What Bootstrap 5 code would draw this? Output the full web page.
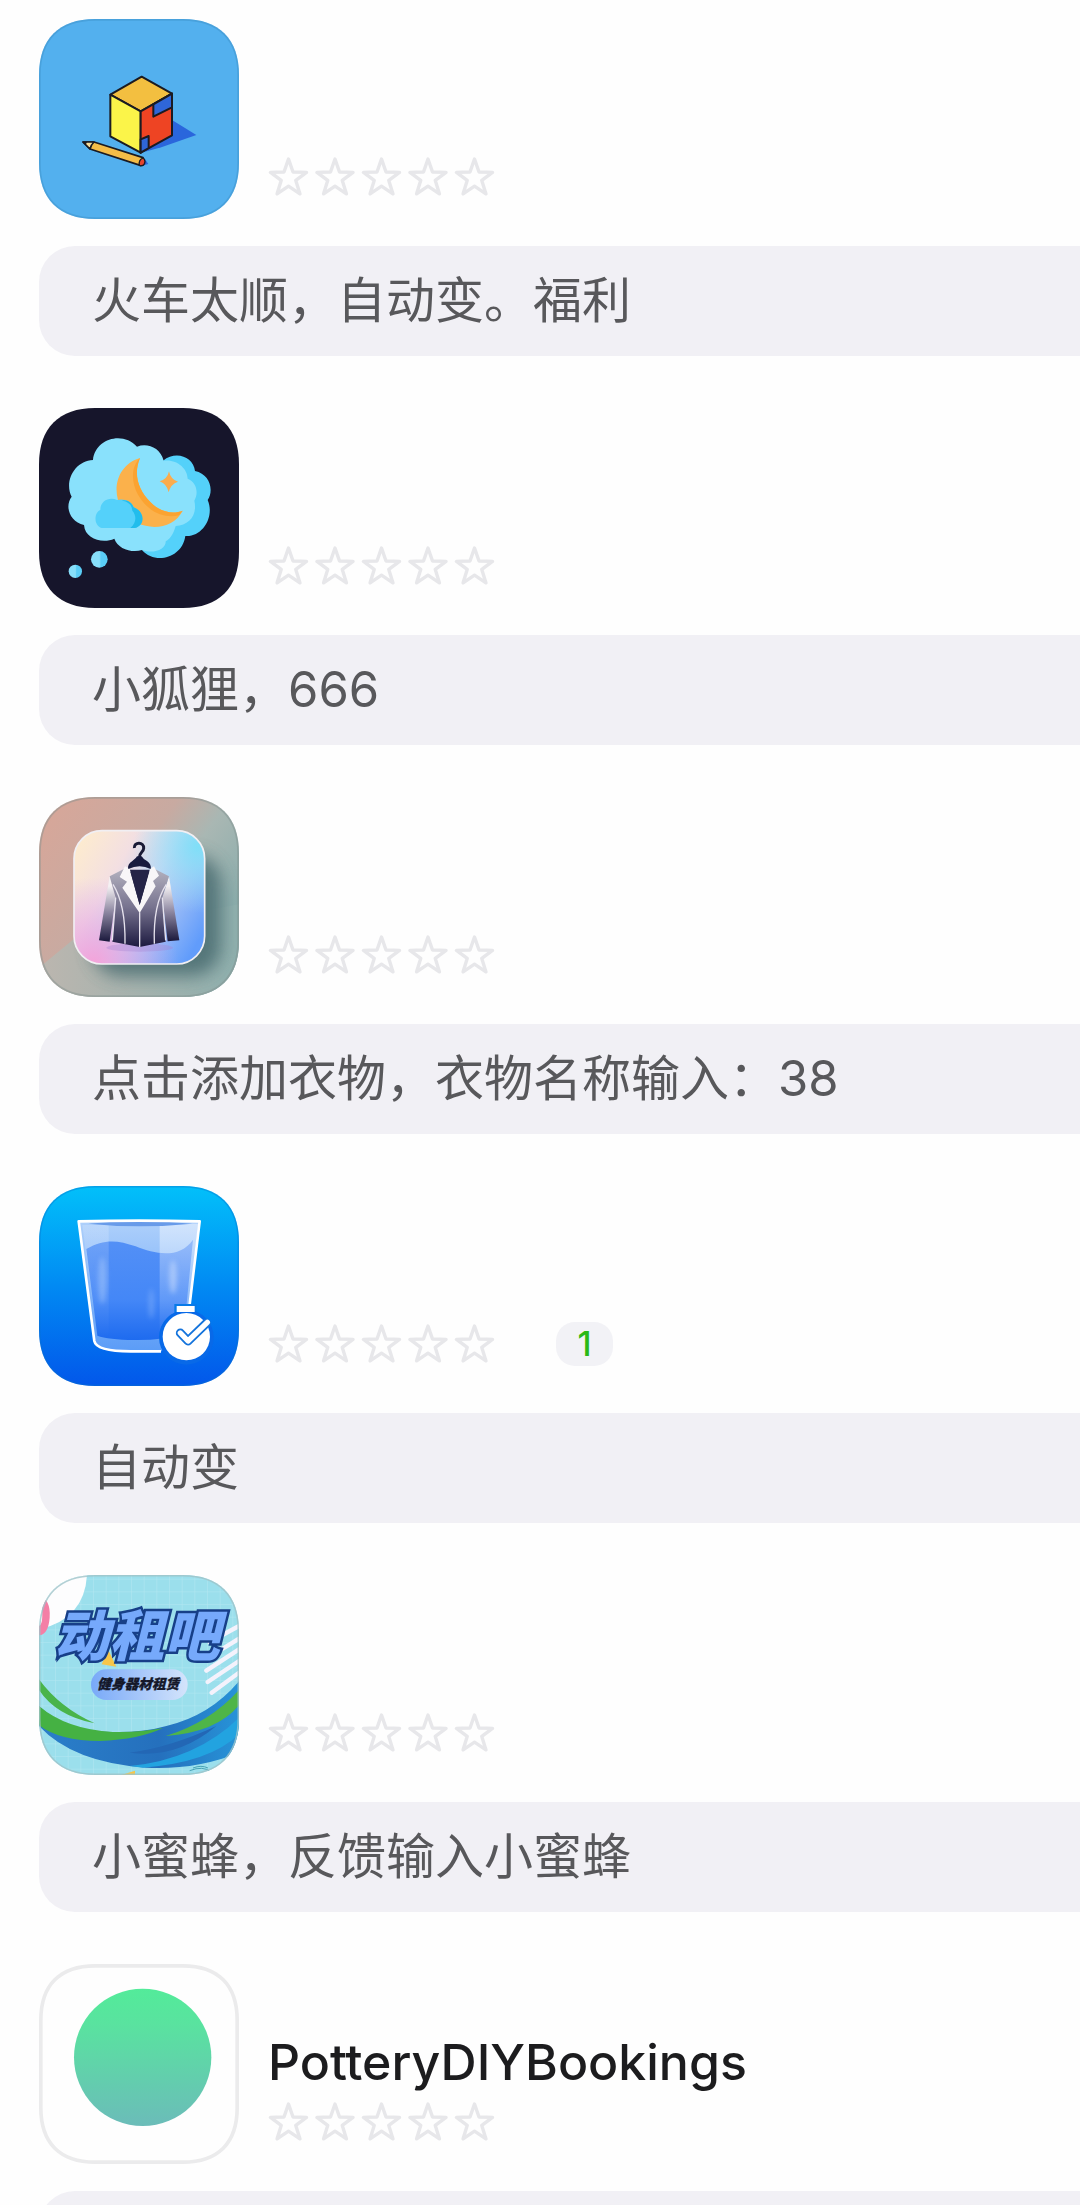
<!DOCTYPE html>
<html lang="zh-CN">
<head>
<meta charset="utf-8">
<meta name="viewport" content="width=device-width, initial-scale=1">
<title>应用列表</title>
<link rel="stylesheet" href="https://cdn.jsdelivr.net/npm/bootstrap@5.3.0/dist/css/bootstrap.min.css">
<style>
  body { background: #fefefe; font-family: Inter, "Noto Sans CJK SC", sans-serif; color: #1c1c1e; }
  .app-screen { height: 100vh; padding: 19px 0 0 39px; }
  .app-item { margin-bottom: 52px; }
  .app-head { gap: 29px; margin-bottom: 27px; }
  .app-icon { width: 200px; height: 200px; clip-path: path("M0 56C0 20 20 0 56 0H144C180 0 200 20 200 56V144C200 180 180 200 144 200H56C20 200 0 180 0 144Z"); }
  .app-info { padding-bottom: 20px; }
  .app-title { font-size: 50px; line-height: 60px; font-weight: 500; margin-bottom: 8px; }
  .app-meta { height: 44px; gap: 60px; }
  .stars { width: 228px; height: 40px; }
  .count-pill { min-width: 57px; height: 44px; border-radius: 19px; background: #f2f2f6; color: #2bb916; font-size: 34px; line-height: 44px; font-weight: 500; }
  .app-note { min-height: 110px; padding: 0 53px; border-radius: 36px 0 0 36px; background: #f1f0f5; color: #58585b; font-size: 49px; line-height: 110px; }
</style>
<script src="https://cdn.jsdelivr.net/npm/bootstrap@5.3.0/dist/js/bootstrap.bundle.min.js"></script>
</head>
<body>

<!-- shared shapes -->
<svg width="0" height="0" class="position-absolute" aria-hidden="true">
  <defs>
    <path id="squircle" d="M0 168C0 60 60 0 168 0H432C540 0 600 60 600 168V432C600 540 540 600 432 600H168C60 600 0 540 0 432Z"/>
    <path id="star" d="M20.5 2L25 15L38.5 15.4L27.8 23.4L31.9 36.8L20.5 29.2L9.1 36.8L13.2 23.4L2.5 15.4L16 15Z"/>
    <g id="five" fill="none" stroke="#e7e7ea" stroke-width="3.4" stroke-linejoin="round">
      <use href="#star"/><use href="#star" x="46.5"/><use href="#star" x="93"/><use href="#star" x="139.5"/><use href="#star" x="186"/>
    </g>
  </defs>
</svg>

<main class="app-screen overflow-hidden">
<ul class="list-unstyled mb-0">

  <li class="app-item">
    <div class="app-head d-flex">
      <svg class="app-icon flex-shrink-0" viewBox="28 27 600 600" role="img" aria-label="魔方与铅笔">
        <rect x="28" y="27" width="600" height="600" fill="#53b0ee"/>
        <path d="M335 428L427 330L500 375L395 412Z" fill="#2a66dc"/>
        <path d="M346 448L356 462L335 468Z" fill="#2a66dc"/>
        <g stroke="#1b1b22" stroke-width="6" stroke-linejoin="round">
          <path d="M336 200L427 251L333 304L242 254Z" fill="#f3bf40"/>
          <path d="M242 254L333 304V428L242 379Z" fill="#fbf449"/>
          <path d="M333 304L427 251V376L333 428Z" fill="#ee4423"/>
          <path d="M371 283L427 251V292L371 320Z" fill="#2f66d8"/>
          <path d="M333 388L357 378V414L333 428Z" fill="#2f66d8"/>
          <path d="M160 396L193 396L340 443Q348 456 334 467L181 417Z" fill="#f4bd48" stroke-width="5"/>
          <path d="M160 396L193 396Q184 404 181 417Z" fill="#f6dc9a" stroke-width="5"/>
          <path d="M340 444Q326 450 329 466Q345 470 346 455Q346 448 340 444Z" fill="#e5452e" stroke-width="4"/>
        </g>
        <path d="M160 396L172 396L168 405Z" fill="#1b1b22"/>
        <use href="#squircle" x="28" y="27" fill="none" stroke="#3d92c9" stroke-opacity=".5" stroke-width="10"/>
      </svg>
      <div class="app-info d-flex flex-column justify-content-end">
        <div class="app-meta d-flex align-items-center">
          <svg class="stars" viewBox="0 0 228 40" role="img" aria-label="评分 0 / 5"><use href="#five"/></svg>
        </div>
      </div>
    </div>
    <div class="app-note">火车太顺，自动变。福利</div>
  </li>

  <li class="app-item">
    <div class="app-head d-flex">
      <svg class="app-icon flex-shrink-0" viewBox="28 24 600 600" role="img" aria-label="梦境云朵">
        <defs>
          <linearGradient id="bub"><stop offset=".5" stop-color="#88e0fb"/><stop offset=".6" stop-color="#5acdf6"/></linearGradient>
        </defs>
        <rect x="28" y="24" width="600" height="600" fill="#16152b"/>
        <path d="M400 182C440 150 492 172 496 213C540 222 554 270 534 300C556 350 518 412 467 408C458 475 375 495 337 450L360 300Z" fill="#54d1fa"/>
        <path d="M190 180C196 115 280 92 322 140C352 128 392 142 402 182C440 176 474 205 474 236C500 246 508 278 494 302C504 346 478 376 438 378C430 405 420 418 408 424C410 444 376 464 337 450C306 460 264 446 254 416C220 432 166 418 163 375C120 366 104 318 126 290C102 244 136 182 190 180Z" fill="#89e1fc"/>
        <path d="M331 174C262 194 240 275 282 337C326 394 426 398 459 332C430 344 390 336 362 306C326 270 310 224 331 174Z" fill="#fbb14b"/>
        <path d="M331 174C308 195 300 240 326 286C356 338 406 356 448 346L459 332C430 344 390 336 362 306C326 270 310 224 331 174Z" fill="#fba331"/>
        <path d="M418 214Q423 239 445 245Q423 252 417 277Q412 252 390 244Q413 238 418 214Z" fill="#fbac4c"/>
        <path d="M216 384C190 376 194 336 212 330C212 300 242 290 262 300C284 294 306 304 312 322C342 334 348 374 316 384Z" fill="#54d1fa"/>
        <path d="M276 301C296 298 308 310 312 322C346 334 348 376 316 384H302C322 368 320 344 308 332C306 312 294 306 276 301Z" fill="#22bdec"/>
        <circle cx="209" cy="478" r="25" fill="url(#bub)"/><circle cx="137" cy="514" r="20" fill="url(#bub)"/>
      </svg>
      <div class="app-info d-flex flex-column justify-content-end">
        <div class="app-meta d-flex align-items-center">
          <svg class="stars" viewBox="0 0 228 40" role="img" aria-label="评分 0 / 5"><use href="#five"/></svg>
        </div>
      </div>
    </div>
    <div class="app-note">小狐狸，666</div>
  </li>

  <li class="app-item">
    <div class="app-head d-flex">
      <svg class="app-icon flex-shrink-0" viewBox="28 28 600 600" role="img" aria-label="衣橱">
        <defs>
          <linearGradient id="wall" x1="0" y1="0" x2="1" y2=".75"><stop offset="0" stop-color="#d9a698"/><stop offset=".45" stop-color="#c8aaa1"/><stop offset=".62" stop-color="#a9b7b3"/><stop offset="1" stop-color="#7fa9a9"/></linearGradient>
          <linearGradient id="floor"><stop offset="0" stop-color="#bcb6af"/><stop offset="1" stop-color="#8fb0ae"/></linearGradient>
          <linearGradient id="tile" x1="0" y1=".15" x2="1" y2=".75"><stop offset="0" stop-color="#fdebcf"/><stop offset=".3" stop-color="#f3dfe2"/><stop offset=".55" stop-color="#c6d4f4"/><stop offset="1" stop-color="#619cfb"/></linearGradient>
          <radialGradient id="pink" cx=".15" cy="1" r=".65"><stop offset="0" stop-color="#f5a3d9"/><stop offset="1" stop-color="#d9a8f0" stop-opacity="0"/></radialGradient>
          <radialGradient id="cyan" cx=".95" cy=".12" r=".5"><stop offset="0" stop-color="#7fdff8"/><stop offset="1" stop-color="#a8e8f5" stop-opacity="0"/></radialGradient>
          <linearGradient id="cloth" x1="0" y1="0" x2="0" y2="1"><stop offset="0" stop-color="#b5b3c0"/><stop offset=".5" stop-color="#77738f"/><stop offset="1" stop-color="#1d1a40"/></linearGradient>
          <linearGradient id="sleeve" x1="0" y1="0" x2="0" y2="1"><stop offset=".15" stop-color="#f4f1f3"/><stop offset=".55" stop-color="#8c86a0"/><stop offset="1" stop-color="#1a183c"/></linearGradient>
          <filter id="soft" x="-30%" y="-30%" width="160%" height="160%"><feGaussianBlur stdDeviation="26"/></filter>
        </defs>
        <rect x="28" y="28" width="600" height="600" fill="url(#wall)"/>
        <path d="M28 540L150 440L628 350V628H28Z" fill="url(#floor)"/>
        <rect x="185" y="200" width="390" height="365" rx="90" fill="#3c6268" opacity=".75" filter="url(#soft)"/>
        <rect x="133" y="129" width="392" height="400" rx="84" fill="url(#tile)"/>
        <rect x="133" y="129" width="392" height="400" rx="84" fill="url(#pink)"/>
        <rect x="133" y="129" width="392" height="400" rx="84" fill="url(#cyan)" stroke="#f1eff3" stroke-width="5"/>
        <ellipse cx="330" cy="480" rx="100" ry="12" fill="#a680d0" opacity=".35"/>
        <path d="M240 266L208 458L240 462L258 330Z" fill="url(#sleeve)"/>
        <path d="M418 266L449 458L414 461L398 330Z" fill="url(#sleeve)"/>
        <path d="M240 266L290 240L330 280L368 240L418 266L398 330L408 462L330 478L248 462L258 330Z" fill="url(#cloth)"/>
        <path d="M300 246H360L330 365Z" fill="#252447"/>
        <path d="M286 236L300 243L330 352L362 243L373 236L388 264L370 280L378 296L330 376L278 300L292 282L270 268Z" fill="#f8f6f8"/>
        <path d="M302 252Q330 246 358 252L330 352Z" fill="#252447"/>
        <path d="M330 374V478M250 290Q288 350 286 468M410 290Q370 350 374 468M258 330L248 458M398 330L408 458" fill="none" stroke="#e6e2ed" stroke-width="4"/>
        <path d="M314 181C312 161 344 162 342 182C341 196 328 194 329 210" fill="none" stroke="#1a1b36" stroke-width="9"/>
        <path d="M322 206H336Q340 214 352 220Q366 230 363 244Q330 228 296 244Q292 230 308 220Q320 212 322 206Z" fill="#171a3e"/>
        <use href="#squircle" x="28" y="28" fill="none" stroke="#80908d" stroke-opacity=".45" stroke-width="11"/>
      </svg>
      <div class="app-info d-flex flex-column justify-content-end">
        <div class="app-meta d-flex align-items-center">
          <svg class="stars" viewBox="0 0 228 40" role="img" aria-label="评分 0 / 5"><use href="#five"/></svg>
        </div>
      </div>
    </div>
    <div class="app-note">点击添加衣物，衣物名称输入：38</div>
  </li>

  <li class="app-item">
    <div class="app-head d-flex">
      <svg class="app-icon flex-shrink-0" viewBox="28 27 600 600" role="img" aria-label="喝水计时">
        <defs>
          <linearGradient id="sky" x1="0" y1="0" x2="0" y2="1"><stop offset="0" stop-color="#02c0fa"/><stop offset=".5" stop-color="#018af3"/><stop offset="1" stop-color="#0257ea"/></linearGradient>
          <linearGradient id="glass" x1="0" y1="0" x2="0" y2="1"><stop offset="0" stop-color="#aed0fb"/><stop offset="1" stop-color="#5b9cf7"/></linearGradient>
          <linearGradient id="water" x1="0" y1="0" x2="0" y2="1"><stop offset="0" stop-color="#5390f6"/><stop offset=".6" stop-color="#4487f7"/><stop offset="1" stop-color="#1e6bef"/></linearGradient>
          <linearGradient id="shine" x1="0" y1="0" x2="0" y2="1"><stop offset="0" stop-color="#fff" stop-opacity=".45"/><stop offset="1" stop-color="#fff" stop-opacity="0"/></linearGradient>
          <filter id="glow" x="-100%" y="-20%" width="300%" height="140%"><feGaussianBlur stdDeviation="8"/></filter>
        </defs>
        <rect x="28" y="27" width="600" height="600" fill="url(#sky)"/>
        <path d="M148 133L194 492Q200 522 290 523H396L478 410L509 133Z" fill="url(#glass)"/>
        <path d="M170 216C225 184 265 190 318 208C378 232 450 246 490 188L462 470Q400 490 315 489Q235 488 203 476Z" fill="url(#water)"/>
        <path d="M390 140H506L474 405L390 485Z" fill="url(#shine)"/>
        <path d="M158 144H237V480L200 474Z" fill="url(#shine)" opacity=".4"/>
        <ellipse cx="218" cy="310" rx="12" ry="70" fill="#a5c8fc" opacity=".55" filter="url(#glow)"/>
        <ellipse cx="430" cy="300" rx="11" ry="50" fill="#c8dcfd" opacity=".6" filter="url(#glow)"/>
        <ellipse cx="365" cy="380" rx="7" ry="45" fill="#82b0fb" opacity=".6" filter="url(#glow)"/>
        <path d="M176 140Q328 126 488 140Q328 156 176 140Z" fill="#689be9"/>
        <path d="M480 382L510 133Q328 129 147 133L194 492Q200 524 310 523H394" fill="none" stroke="#fff" stroke-width="8" stroke-linejoin="round"/>
        <path d="M434 381H501V410Q548 434 550 484H388Q392 428 434 408Z" fill="#087ae8"/>
        <circle cx="470" cy="481" r="82" fill="#0869e8"/>
        <rect x="441" y="387" width="54" height="18" fill="#fff"/>
        <circle cx="470" cy="479" r="71" fill="#fff"/>
        <path d="M452 468L475 492L530 439" fill="none" stroke="#1574dc" stroke-width="27" stroke-linejoin="round" stroke-linecap="round"/>
        <path d="M452 468L475 492L533 436" fill="none" stroke="#fff" stroke-width="16" stroke-linejoin="round" stroke-linecap="round"/>
        <use href="#squircle" x="28" y="27" fill="none" stroke="#0a74cd" stroke-opacity=".4" stroke-width="9"/>
      </svg>
      <div class="app-info d-flex flex-column justify-content-end">
        <div class="app-meta d-flex align-items-center">
          <svg class="stars" viewBox="0 0 228 40" role="img" aria-label="评分 0 / 5"><use href="#five"/></svg>
          <span class="count-pill text-center">1</span>
        </div>
      </div>
    </div>
    <div class="app-note">自动变</div>
  </li>

  <li class="app-item">
    <div class="app-head d-flex">
      <svg class="app-icon flex-shrink-0" viewBox="28 27 600 600" role="img" aria-label="动租吧 健身器材租赁">
        <defs>
          <pattern id="grid" width="38" height="38" patternUnits="userSpaceOnUse"><path d="M0 0H38M0 0V38" stroke="#b4e8f1" stroke-width="3"/></pattern>
          <linearGradient id="pill"><stop offset="0" stop-color="#78a9f8"/><stop offset="1" stop-color="#d4e4fb"/></linearGradient>
          <linearGradient id="wave"><stop offset="0" stop-color="#2a7fca"/><stop offset=".6" stop-color="#2570bd"/><stop offset="1" stop-color="#2793d8"/></linearGradient>
        </defs>
        <rect x="28" y="27" width="600" height="600" fill="#9bdfec"/>
        <rect x="28" y="27" width="600" height="600" fill="url(#grid)"/>
        <path d="M28 27H172Q164 160 28 190Z" fill="#fdfdfe"/>
        <path d="M28 90Q64 100 60 155Q56 205 28 208V180Q42 175 36 120H28Z" fill="#f47fa6"/>
        <path d="M540 228L628 180M568 255L628 218M530 314L628 250M534 348L628 285M546 380L628 320" stroke="#f4f2fc" stroke-width="13" stroke-linecap="round"/>
        <path d="M28 340Q90 425 195 472Q80 450 28 372Z" fill="#49b44a"/>
        <path d="M28 420Q110 500 250 498Q340 500 410 480Q540 450 628 346V560Q500 612 350 605Q130 590 28 480Z" fill="url(#wave)"/>
        <path d="M28 420Q110 490 250 498Q330 500 400 486Q330 520 210 525Q90 525 28 478Z" fill="#45b143"/>
        <path d="M408 510Q540 470 628 372V418Q560 500 408 510Z" fill="#4fb548"/>
        <path d="M300 600Q500 580 628 455V505Q540 590 340 605Z" fill="#22a3e0"/>
        <path d="M300 560Q420 545 560 480Q440 580 300 560Z" fill="#2367b5"/>
        <path d="M236 252L260 302L216 295ZM275 627L316 614V627Z" fill="#f7c64a"/>
        <path d="M480 614Q520 598 545 618M490 606Q515 596 535 606" fill="none" stroke="#48a3b4" stroke-width="3"/>
        <rect x="184" y="310" width="290" height="92" rx="46" fill="url(#pill)"/>
        <text x="72" y="270" font-family="'Noto Sans CJK SC', sans-serif" font-size="166" font-weight="900" font-style="italic" fill="#76a9fb" stroke="#173f88" stroke-width="15" stroke-linejoin="miter" paint-order="stroke">动租吧</text>
        <text x="203" y="368" font-family="'Noto Sans CJK SC', sans-serif" font-size="41" font-weight="900" font-style="italic" fill="#15182a" stroke="#15182a" stroke-width="1">健身器材租赁</text>
        <use href="#squircle" x="28" y="27" fill="none" stroke="#9fc3c8" stroke-opacity=".8" stroke-width="9"/>
      </svg>
      <div class="app-info d-flex flex-column justify-content-end">
        <div class="app-meta d-flex align-items-center">
          <svg class="stars" viewBox="0 0 228 40" role="img" aria-label="评分 0 / 5"><use href="#five"/></svg>
        </div>
      </div>
    </div>
    <div class="app-note">小蜜蜂，反馈输入小蜜蜂</div>
  </li>

  <li class="app-item">
    <div class="app-head d-flex">
      <svg class="app-icon flex-shrink-0" viewBox="28 27 600 600" role="img" aria-label="PotteryDIYBookings">
        <defs><linearGradient id="mint" x1="0" y1="0" x2="0" y2="1"><stop offset="0" stop-color="#53eb9a"/><stop offset=".25" stop-color="#59e39f"/><stop offset="1" stop-color="#6bbcb9"/></linearGradient></defs>
        <rect x="28" y="27" width="600" height="600" fill="#fefefe"/>
        <circle cx="339" cy="307" r="206" fill="url(#mint)"/>
        <use href="#squircle" x="28" y="27" fill="none" stroke="#ebebec" stroke-width="22"/>
      </svg>
      <div class="app-info d-flex flex-column justify-content-end">
        <h2 class="app-title">PotteryDIYBookings</h2>
        <div class="app-meta d-flex align-items-center">
          <svg class="stars" viewBox="0 0 228 40" role="img" aria-label="评分 0 / 5"><use href="#five"/></svg>
        </div>
      </div>
    </div>
    <div class="app-note"></div>
  </li>

</ul>
</main>
</body>
</html>
